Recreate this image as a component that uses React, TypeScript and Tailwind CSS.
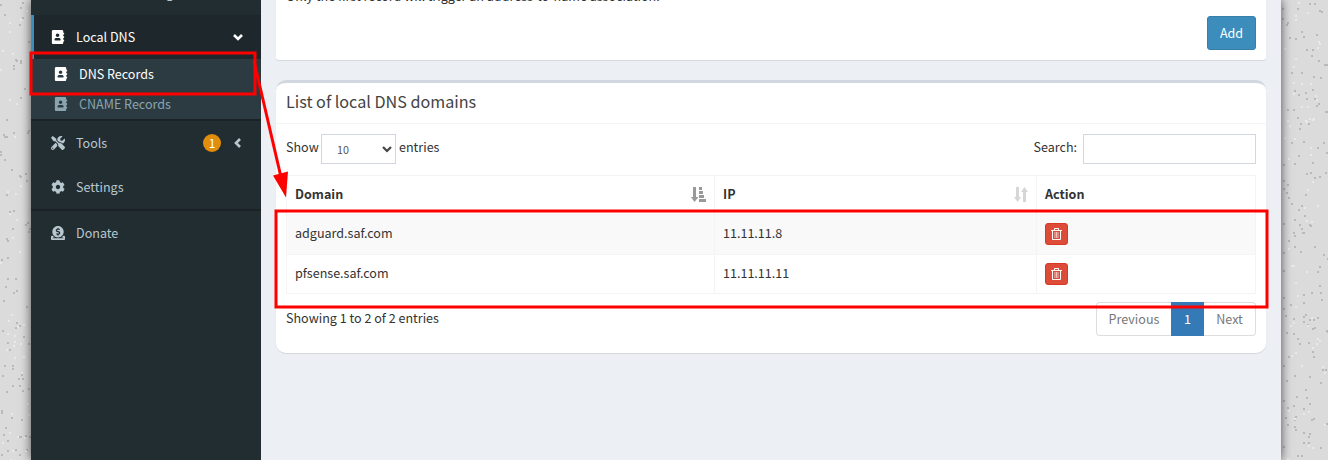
import React from "react";
import { FaAddressBook, FaTools, FaCog, FaDonate } from "react-icons/fa";

type Points = [number, number][];

const leftDark: Points = [
  [22,2],[20,7],[4,14],[15,59],[16,60],[20,60],[20,62],[13,65],[13,68],[24,88],[22,17],[19,24],[0,4],[28,41],[20,97],[6,119],[3,134],[4,136],[6,136],[13,132],[27,132],[28,130],[4,159],[11,169],[0,151],[0,154],[19,175],[20,176],[25,173],[6,194],[26,180],[13,210],[9,211],[25,224],[27,222],[12,228],[6,238],[7,240],[29,228],[28,231],[1,259],[7,257],[7,278],[15,278],[5,286],[16,290],[13,292],[26,306],[3,300],[16,322],[15,327],[19,325],[2,330],[23,336],[7,342],[9,349],[28,343],[4,365],[12,365],[12,368],[2,375],[21,374],[22,378],[18,378],[12,385],[19,385],[22,390],[28,388],[6,391],[1,410],[1,412],[11,417],[21,419],[5,427],[3,434],[18,436],[20,436],[25,435],[29,436],[7,440],[15,449],[19,454],[26,449],[1,454],[7,450],
];
const leftLight: Points = [
  [9,22],[26,10],[9,31],[20,19],[2,50],[12,53],[9,99],[16,103],[0,69],[14,136],[7,191],[9,213],[15,193],[20,185],[16,219],[19,251],[12,237],[11,314],[8,320],[17,326],[23,324],[7,333],[14,335],[14,341],[20,343],[13,345],[6,349],[14,357],[23,356],[21,372],[27,403],[11,413],[28,414],[9,432],[2,442],[17,436],[24,437],[12,450],[25,450],[10,459],[0,262],
];
const rightDark: Points = [
  [1,8],[6,22],[28,3],[33,3],[16,8],[38,10],[40,11],[5,24],[1,18],[8,37],[20,31],[14,38],[22,36],[35,34],[25,49],[31,49],[30,55],[37,60],[43,64],[45,64],[20,72],[32,76],[10,72],[39,77],[13,90],[31,89],[17,94],[24,92],[25,98],[33,98],[35,105],[37,103],[6,109],[12,109],[44,111],[46,111],[16,117],[27,123],[19,123],[18,128],[42,142],[36,147],[10,142],[22,141],[45,152],[17,155],[13,163],[31,162],[2,164],[29,172],[44,172],[25,173],[33,177],[38,176],[2,180],[6,184],[26,189],[24,194],[2,188],[5,192],[7,197],[10,203],[20,205],[17,209],[23,215],[13,219],[28,224],[29,225],[2,223],[20,228],[18,224],[12,232],[13,235],[21,232],[22,232],[7,240],[33,246],[13,246],[19,251],[42,254],[2,252],[46,258],[10,265],[38,266],[36,271],[2,270],[38,285],[22,294],[30,292],[40,299],[2,297],[39,292],[22,302],[9,304],[2,308],[24,314],[4,315],[22,316],[12,318],[36,317],[22,321],[28,319],[32,319],[26,324],[31,328],[33,327],[12,333],[5,332],[16,338],[45,330],[46,331],[18,343],[27,342],[31,351],[32,356],[7,356],[2,365],[41,369],[44,369],[13,375],[28,376],[5,380],[39,382],[24,389],[15,396],[25,397],[2,400],[12,405],[28,403],[6,407],[22,408],[14,416],[4,417],[30,419],[32,418],[13,419],[45,423],[6,424],[13,426],[14,429],[22,432],[28,433],[27,436],[22,442],[27,442],[2,446],[39,447],[16,455],[20,455],
];
const rightLight: Points = [
  [17,2],[14,15],[26,12],[14,19],[37,41],[38,43],[36,47],[3,48],[14,58],[12,66],[12,82],[20,83],[29,83],[12,93],[34,95],[35,99],[20,106],[26,106],[28,118],[31,119],[25,121],[24,120],[32,118],[6,120],[8,125],[3,137],[13,138],[29,147],[7,158],[29,154],[31,181],[26,189],[36,205],[23,207],[25,220],[30,221],[7,248],[10,265],[12,265],[25,271],[14,282],[16,295],[14,306],[30,317],[12,322],[26,325],[9,325],[36,338],[35,343],[38,340],[10,355],[14,352],[31,347],[20,365],[41,366],[43,372],[27,411],[22,413],[7,410],[43,424],[13,418],[27,445],[31,447],[6,458],
];

function Specks({ dark, light }: { dark: Points; light: Points }) {
  return (
    <svg className="h-full w-full" shapeRendering="crispEdges">
      {dark.map(([x, y], i) => <rect key={"d" + i} x={x} y={y} width="2" height="2" fill="#b9b9b9" />)}
      {light.map(([x, y], i) => <rect key={"l" + i} x={x} y={y} width="2" height="2" fill="#e9e9e9" />)}
    </svg>
  );
}

function Angle({ down }: { down?: boolean }) {
  return (
    <svg width="10" height="10" viewBox="0 0 10 10" fill="none" stroke={down ? "#fff" : "#b8c7ce"} strokeWidth="2.6">
      <path d={down ? "M1 3l4 4 4-4" : "M7 1L3 5l4 4"} />
    </svg>
  );
}

function Trash() {
  return (
    <span className="flex h-[22px] w-[23px] items-center justify-center rounded-[3px] border border-[#d73925] bg-[#dd4b39]">
      <svg width="11" height="12" viewBox="0 0 11 12" fill="none" stroke="#fff">
        <path d="M0 2.500h11M3.500 2V.5h4V2M1.500 3v8.500h8V3" />
        <path d="M4 4v6M5.500 4v6M7 4v6" strokeOpacity=".65" />
      </svg>
    </span>
  );
}

const records = [
  { domain: "adguard.saf.com", ip: "11.11.11.8" },
  { domain: "pfsense.saf.com", ip: "11.11.11.11" },
];

export default function App() {
  return (
    <div className="relative flex h-[460px] w-[1328px] overflow-hidden bg-[#dbdbdb] font-['Noto_Sans_CJK_SC',sans-serif] text-[12.55px] leading-5 text-[#333]">
      <div className="w-[31px] shrink-0"><Specks dark={leftDark} light={leftLight} /></div>
      <div className="z-10 flex w-[1250px] shrink-0 bg-[#ecf0f5] shadow-[0_0_10px_rgba(0,0,0,0.65)]">
        <aside className="flex w-[230px] shrink-0 flex-col bg-[#222d32] text-[#b8c7ce]">
          <div className="h-[15px] shrink-0 overflow-hidden"><div className="-mt-[17px] pl-[135px]">g</div></div>
          <div className="flex h-11 items-center border-l-[3px] border-[#3c8dbc] bg-[#1e282c] pl-[17px] pr-[18px] text-white">
            <FaAddressBook size={14} /><span className="ml-[11px] flex-1">Local DNS</span><Angle down />
          </div>
          <div className="flex h-[60px] flex-col bg-[#2c3b41]">
            <div className="flex h-[30px] items-center pl-[23px] text-white"><FaAddressBook size={14} /><span className="ml-[11px]">DNS Records</span></div>
            <div className="flex h-[30px] items-center pl-[23px] text-[#8aa4af]"><FaAddressBook size={14} /><span className="ml-[11px]">CNAME Records</span></div>
          </div>
          <div className="flex h-[46px] items-center border-t-2 border-[#1a2226] pl-5 pr-[18px]">
            <FaTools size={14} /><span className="ml-[11px] flex-1">Tools</span>
            <span className="mr-[12px] flex h-[18px] w-[18px] items-center justify-center rounded-full bg-[#e08e0b] text-[12px] leading-[18px] text-white">1</span><Angle />
          </div>
          <div className="flex h-11 items-center pl-5"><FaCog size={14} /><span className="ml-[11px]">Settings</span></div>
          <div className="flex h-[46px] items-center border-t-2 border-[#1a2226] pl-5"><FaDonate size={14} /><span className="ml-[11px]">Donate</span></div>
        </aside>
        <main className="w-[1020px] px-[15px]">
          <section className="h-[60px] w-[990px] rounded-b-[3px] bg-white px-[10px] shadow-[0_1px_1px_rgba(0,0,0,0.1)]">
            <div className="h-4 overflow-hidden"><p className="-mt-[14px]">Only the first record will trigger an address-to-name association.</p></div>
            <div className="flex justify-end"><button className="h-[34px] w-[49px] rounded-[3px] border border-[#367fa9] bg-[#3c8dbc] text-white">Add</button></div>
          </section>
          <section className="mt-5 h-[273px] w-[990px] rounded-[10px] border-t-[3px] border-[#d2d6de] bg-white shadow-[0_1px_1px_rgba(0,0,0,0.1)]">
            <h3 className="h-[41px] border-b border-[#f4f4f4] px-[10px] pt-[8px] text-[16.15px] text-[#444]">List of local DNS domains</h3>
            <div className="flex h-[51px] px-[10px] pt-[10px]">
              <span className="w-[35px] pt-[3px]">Show</span>
              <div className="flex h-[30px] w-[75px] items-center justify-between border border-[#d2d6de] pl-[15px] pr-[3px] text-[10.8px] text-[#555]"><span>10</span><svg width="10" height="8" viewBox="0 0 10 8" fill="none" stroke="#444" strokeWidth="2.2"><path d="M1 2l4 4 4-4" /></svg></div>
              <span className="ml-[3px] pt-[3px]">entries</span>
              <span className="ml-auto pt-[3px]">Search:</span>
              <input className="ml-[6px] h-[30px] w-[173px] border border-[#d2d6de]" />
            </div>
            <table className="ml-[10px] w-[969px] table-fixed border-collapse">
              <colgroup><col className="w-[428px]" /><col className="w-[322px]" /><col className="w-[219px]" /></colgroup>
              <thead><tr className="h-[39px] text-left font-bold">
                <th className="border border-[#f4f4f4] px-2 pb-[2px] pt-0"><div className="flex items-center justify-between">Domain
                  <svg width="15" height="15" viewBox="0 0 15 15" fill="#999"><path d="M2 0h3v10h2.5L3.5 15 0 10h2zM8 0h3v3H8zM8 4h4v3H8zM8 8h5v3H8zM8 12h7v3H8z" /></svg></div></th>
                <th className="border border-[#f4f4f4] px-2 pb-[2px] pt-0"><div className="flex items-center justify-between">IP
                  <svg width="14" height="15" viewBox="0 0 14 15" fill="#d6d6d6"><path d="M2 0h3v10h2L3.500 15 0 10h2zM9 15h3V5h2L10.500 0 7 5h2z" /></svg></div></th>
                <th className="border border-[#f4f4f4] px-2 pb-[2px] pt-0">Action</th>
              </tr></thead>
              <tbody>
                {records.map(({ domain, ip }) => (
                  <tr key={domain} className="h-[39.5px] odd:bg-[#f9f9f9]">
                    <td className="border border-[#f4f4f4] px-2 pb-[2px] pt-0">{domain}</td>
                    <td className="border border-[#f4f4f4] px-2 pb-[2px] pt-0">{ip}</td>
                    <td className="border border-[#f4f4f4] px-2 py-0"><Trash /></td>
                  </tr>
                ))}
              </tbody>
            </table>
            <div className="flex justify-between px-[10px] pt-2">
              <span className="pt-[6px]">Showing 1 to 2 of 2 entries</span>
              <div className="flex h-[34px] text-center leading-[32px] text-[#777]">
                <span className="w-[75px] rounded-l border border-r-0 border-[#ddd]">Previous</span>
                <span className="w-[33px] border border-[#337ab7] bg-[#337ab7] text-white">1</span>
                <span className="w-[52px] rounded-r border border-l-0 border-[#ddd]">Next</span>
              </div>
            </div>
          </section>
        </main>
      </div>
      <div className="w-[47px] shrink-0"><Specks dark={rightDark} light={rightLight} /></div>
      <svg className="absolute inset-0 z-20" width="1328" height="460" fill="none" stroke="#f00" strokeWidth="3">
        <rect x="31" y="53" width="224" height="41" />
        <rect x="276" y="211" width="991" height="96" />
        <path d="M254 61L280.500 175" />
        <path d="M273 175.500l15-4-2 26z" fill="#f00" stroke="none" />
      </svg>
    </div>
  );
}
